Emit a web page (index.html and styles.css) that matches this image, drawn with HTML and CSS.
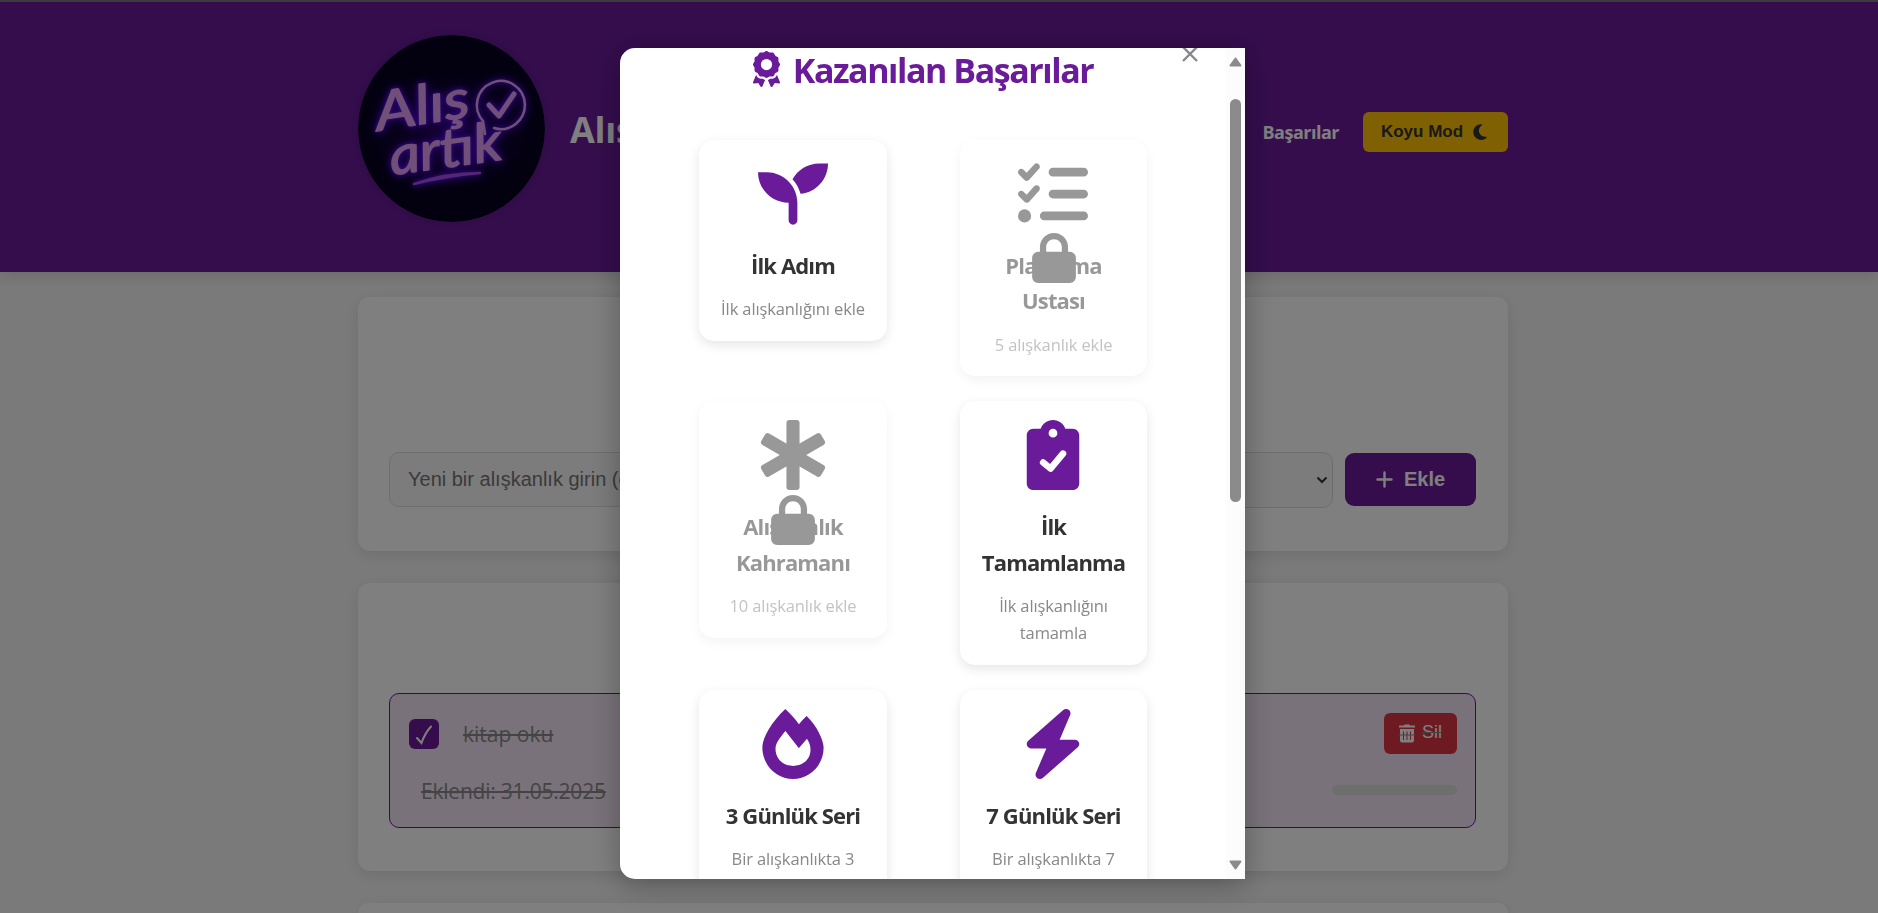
FILE: index.html
```html
<!DOCTYPE html>
<html lang="tr">
<head>
<meta charset="utf-8">
<title>Alış Artık</title>
<link rel="stylesheet" href="styles.css">
</head>
<body>
<header class="header">
  <div class="header-inner">
    <div class="brand">
      <svg class="logo" viewBox="0 0 187 187">
        <defs>
          <radialGradient id="night"><stop offset="0" stop-color="#2c0078"/><stop offset=".5" stop-color="#120038"/><stop offset="1" stop-color="#060020"/></radialGradient>
        </defs>
        <circle cx="93.500" cy="93.500" r="93.500" fill="#060020"/>
        <ellipse cx="92" cy="96" rx="88" ry="62" fill="url(#night)"/>
        <g class="neon">
          <text class="script" x="20" y="96" font-size="54" textLength="95" lengthAdjust="spacingAndGlyphs" transform="rotate(-9 20 96)">Alış</text>
          <text class="script" x="34" y="140" font-size="54" textLength="113" lengthAdjust="spacingAndGlyphs" transform="rotate(-8 34 140)">artık</text>
          <path class="tube" d="M136 93A24 24 0 1 0 125 86L127 99" stroke-width="2.500"/>
          <path class="tube" d="M131 70L141 81L156 59" stroke-width="5"/>
          <path class="tube under" d="M56 149Q88 138 122 138Q88 141 56 149Z" stroke-width="2.500"/>
        </g>
      </svg>
      <h1 class="site-title">Alış Artık</h1>
    </div>
    <nav class="nav">
      <a class="nav-link">Başarılar</a>
      <button class="mode-btn">Koyu Mod
        <svg class="moon" viewBox="0 0 384 512"><path d="M223.500 32C100 32 0 132.300 0 256S100 480 223.500 480c60.600 0 115.500-24.200 155.800-63.400c5-4.900 6.300-12.500 3.100-18.700s-10.100-9.700-17-8.500c-9.800 1.700-19.800 2.600-30.100 2.600c-96.900 0-175.500-78.800-175.500-176c0-65.800 36-123.100 89.300-153.300c6.100-3.500 9.200-10.500 7.700-17.300s-7.300-11.900-14.300-12.500c-6.300-.5-12.600-.8-19-.8z"/></svg>
      </button>
    </nav>
  </div>
</header>
<main class="container">
  <section class="panel panel-form">
    <div class="habit-form">
      <div class="field">Yeni bir alışkanlık girin (örn: Su iç)</div>
      <div class="select"><svg class="chevron" viewBox="0 0 12 8"><path d="M1.500 1.500L6 6L10.500 1.500"/></svg></div>
      <button class="add-btn"><svg class="plus" viewBox="0 0 17 17"><path d="M8.500 1.500V15.500M1.500 8.500H15.500"/></svg>Ekle</button>
    </div>
  </section>
  <section class="panel panel-list">
    <div class="habit">
      <div class="habit-row">
        <span class="check"><svg class="tick" viewBox="0 0 30 30"><path d="M8 19L12.500 24Q16 14 22 7.500"/></svg></span>
        <span class="habit-name">kitap oku</span>
        <button class="delete-btn">
          <svg class="trash" viewBox="0 0 16 19"><path fill-rule="evenodd" d="M5.500 0.500H10.500L11 1.500H15.500Q16 1.500 16 2V3.500H0V2Q0 1.500 .5 1.500H5ZM1 5H15V16.500Q15 18.500 13 18.500H3Q1 18.500 1 16.500ZM4 7.500V16H5V7.500ZM7.500 7.500V16H8.500V7.500ZM11 7.500V16H12V7.500Z"/><path class="trash-line" d="M0 11H16"/></svg>
          <span class="struck">Sil</span>
        </button>
      </div>
      <div class="habit-row meta">
        <span class="habit-date">Eklendi: 31.05.2025</span>
        <span class="progress"></span>
      </div>
    </div>
  </section>
  <section class="panel panel-next"></section>
</main>
<div class="overlay">
  <div class="modal">
    <div class="modal-body">
      <span class="close"><svg class="close-x" viewBox="0 0 16 16"><path d="M1 1L15 15M15 1L1 15"/></svg></span>
      <h2 class="modal-title">
        <svg class="award" viewBox="0 0 384 512"><path d="M173.800 5.500c11-7.300 25.400-7.300 36.400 0L228 17.200c6 3.900 13 5.800 20.100 5.400l21.300-1.300c13.200-.8 25.600 6.400 31.500 18.200l9.600 19.100c3.200 6.400 8.400 11.500 14.700 14.700L344.500 83c11.800 5.900 19 18.300 18.200 31.500l-1.300 21.300c-.4 7.100 1.500 14.200 5.400 20.100l11.800 17.800c7.300 11 7.300 25.400 0 36.400L366.800 228c-3.900 6-5.800 13-5.400 20.100l1.300 21.300c.8 13.200-6.400 25.600-18.200 31.500l-19.100 9.600c-6.400 3.200-11.500 8.400-14.700 14.700L301 344.500c-5.900 11.800-18.300 19-31.500 18.200l-21.300-1.300c-7.100-.4-14.200 1.500-20.100 5.400l-17.800 11.800c-11 7.300-25.400 7.300-36.400 0L156 366.800c-6-3.900-13-5.800-20.100-5.400l-21.300 1.300c-13.200 .8-25.600-6.400-31.500-18.200l-9.600-19.100c-3.200-6.400-8.400-11.500-14.700-14.700L39.500 301c-11.800-5.900-19-18.300-18.200-31.500l1.300-21.300c.4-7.100-1.500-14.200-5.400-20.100L5.500 210.200c-7.300-11-7.300-25.400 0-36.400L17.200 156c3.900-6 5.800-13 5.400-20.100l-1.300-21.300c-.8-13.200 6.400-25.600 18.200-31.500l19.100-9.600C65 70.200 70.200 65 73.400 58.600L83 39.500c5.900-11.800 18.300-19 31.500-18.200l21.300 1.300c7.100 .4 14.200-1.500 20.100-5.400L173.800 5.500zM272 192a80 80 0 1 0 -160 0 80 80 0 1 0 160 0zM1.300 441.800L44.400 339.300c.2 .1 .3 .2 .4 .4l9.600 19.100c11.700 23.200 36 37.300 62 35.800l21.300-1.300c.2 0 .5 0 .7 .2l17.800 11.800c5.100 3.300 10.500 5.900 16.100 7.700l-37.600 89.300c-2.300 5.500-7.400 9.200-13.300 9.700s-11.600-2.200-14.800-7.200L74.400 455.500l-56.100 8.300c-5.700 .8-11.400-1.500-15-6s-4.300-10.700-2.100-16zm248 60.400L211.700 413c5.600-1.800 11-4.300 16.100-7.700l17.800-11.800c.2-.1 .4-.2 .7-.2l21.300 1.300c26 1.500 50.300-12.600 62-35.800l9.600-19.100c.1-.2 .2-.3 .4-.4l43.200 102.500c2.200 5.300 1.400 11.400-2.100 16s-9.300 6.900-15 6l-56.100-8.300-32.200 49.200c-3.200 5-8.900 7.700-14.800 7.200s-11-4.300-13.300-9.700z"/></svg>
        <span>Kazanılan Başarılar</span>
      </h2>
      <div class="grid">
        <article class="badge">
          <svg class="badge-icon" viewBox="0 0 512 512"><path d="M64 96H0c0 123.700 100.300 224 224 224v128c0 17.700 14.300 32 32 32s32-14.300 32-32V320C288 196.300 187.700 96 64 96zM448 32c-84.300 0-157.400 46.500-195.700 115.200 27.700 30.200 48.200 66.900 59 107.600C424 243.100 512 147.900 512 32h-64z"/></svg>
          <h3 class="badge-title">İlk Adım</h3>
          <p class="badge-text">İlk alışkanlığını ekle</p>
        </article>
        <article class="badge locked">
          <svg class="badge-icon" viewBox="0 0 512 512"><path d="M152.100 38.200c9.900 8.900 10.700 24 1.800 33.900l-72 80c-4.400 4.900-10.600 7.800-17.200 7.900s-12.900-2.400-17.600-7L7 113C-2.300 103.600-2.300 88.400 7 79s24.600-9.400 33.900 0l22.100 22.100 55.100-61.200c8.900-9.900 24-10.700 33.900-1.800zm0 160c9.900 8.900 10.700 24 1.800 33.900l-72 80c-4.400 4.900-10.600 7.800-17.200 7.900s-12.900-2.400-17.600-7L7 273c-9.400-9.400-9.400-24.600 0-33.900s24.600-9.400 33.900 0l22.100 22.100 55.100-61.200c8.900-9.900 24-10.700 33.900-1.800zM224 96c0-17.700 14.300-32 32-32H480c17.700 0 32 14.300 32 32s-14.300 32-32 32H256c-17.700 0-32-14.300-32-32zm0 160c0-17.700 14.300-32 32-32H480c17.700 0 32 14.300 32 32s-14.300 32-32 32H256c-17.700 0-32-14.300-32-32zM160 416c0-17.700 14.300-32 32-32H480c17.700 0 32 14.300 32 32s-14.300 32-32 32H192c-17.700 0-32-14.300-32-32zM48 368a48 48 0 1 1 0 96 48 48 0 1 1 0-96z"/></svg>
          <h3 class="badge-title">Planlama Ustası</h3>
          <p class="badge-text">5 alışkanlık ekle</p>
          <svg class="lock" viewBox="0 0 448 512"><path d="M144 144v48H304V144c0-44.200-35.800-80-80-80s-80 35.800-80 80zM80 192V144C80 64.500 144.500 0 224 0s144 64.500 144 144v48h16c35.300 0 64 28.700 64 64V448c0 35.300-28.700 64-64 64H64c-35.300 0-64-28.700-64-64V256c0-35.300 28.700-64 64-64H80z"/></svg>
        </article>
        <article class="badge locked">
          <svg class="badge-icon" viewBox="0 0 512 512"><rect x="208" width="96" height="512" rx="22"/><rect x="208" y="4" width="96" height="504" rx="22" transform="rotate(60 256 256)"/><rect x="208" y="4" width="96" height="504" rx="22" transform="rotate(-60 256 256)"/></svg>
          <h3 class="badge-title">Alışkanlık Kahramanı</h3>
          <p class="badge-text">10 alışkanlık ekle</p>
          <svg class="lock" viewBox="0 0 448 512"><path d="M144 144v48H304V144c0-44.200-35.800-80-80-80s-80 35.800-80 80zM80 192V144C80 64.500 144.500 0 224 0s144 64.500 144 144v48h16c35.300 0 64 28.700 64 64V448c0 35.300-28.700 64-64 64H64c-35.300 0-64-28.700-64-64V256c0-35.300 28.700-64 64-64H80z"/></svg>
        </article>
        <article class="badge">
          <svg class="badge-icon" viewBox="0 0 384 512"><path d="M192 0c-41.800 0-77.400 26.700-90.500 64H48C21.500 64 0 85.500 0 112V464c0 26.500 21.500 48 48 48H336c26.500 0 48-21.500 48-48V112c0-26.500-21.500-48-48-48H282.500C269.400 26.700 233.800 0 192 0zm0 64a32 32 0 1 1 0 64 32 32 0 1 1 0-64z"/><path class="cut" d="M120 311L174 355L265 246"/></svg>
          <h3 class="badge-title">İlk Tamamlanma</h3>
          <p class="badge-text">İlk alışkanlığını tamamla</p>
        </article>
        <article class="badge">
          <svg class="badge-icon" viewBox="0 0 448 512"><path d="M323.560 51.200c-20.800 19.300-39.560 39.590-56.220 59.970C240.080 73.620 206.280 35.530 168 0 69.740 91.170 0 209.960 0 281.600 0 408.850 100.290 512 224 512s224-103.150 224-230.400c0-53.270-51.980-163.140-124.440-230.400zm-19.470 340.650C282.430 407.010 255.720 416 226.860 416 154.710 416 96 368.260 96 290.750c0-38.610 24.310-72.630 72.790-130.750 6.930 7.980 98.830 125.340 98.830 125.340l58.630-66.880c4.140 6.850 7.910 13.550 11.270 19.970 27.350 52.190 15.810 118.970-33.430 153.420z"/></svg>
          <h3 class="badge-title">3 Günlük Seri</h3>
          <p class="badge-text">Bir alışkanlıkta 3</p>
        </article>
        <article class="badge">
          <svg class="badge-icon" viewBox="0 0 448 512"><path d="M349.400 44.600c5.900-13.700 1.500-29.700-10.600-38.500s-28.600-8-39.900 1.800l-256 224c-10 8.800-13.600 22.900-8.900 35.300S50.700 288 64 288H175.500L98.600 467.400c-5.900 13.700-1.500 29.700 10.600 38.500s28.600 8 39.900-1.800l256-224c10-8.800 13.600-22.900 8.900-35.300s-16.600-20.700-30-20.700H272.500L349.400 44.600z"/></svg>
          <h3 class="badge-title">7 Günlük Seri</h3>
          <p class="badge-text">Bir alışkanlıkta 7</p>
        </article>
      </div>
    </div>
    <div class="scrollbar">
      <svg class="arrow" viewBox="0 0 13 10"><path d="M6.500 1.500L11.500 8.500H1.500Z"/></svg>
      <span class="thumb"></span>
      <svg class="arrow down" viewBox="0 0 13 10"><path d="M6.500 8.500L11.500 1.500H1.500Z"/></svg>
    </div>
  </div>
</div>
</body>
</html>
```
FILE: styles.css
```css
* { box-sizing: border-box; margin: 0; padding: 0; }
html, body { height: 100%; overflow: hidden; }
body {
  background: #f5f5f5;
  border-top: 2px solid #787878;
  color: #333;
  font-family: "Open Sans", "Noto Sans", sans-serif;
  font-size: 18px;
  line-height: 1.6;
}
button { border: 0; font-family: "Liberation Sans", Arial, sans-serif; }
svg { display: block; flex: none; }

.header {
  position: relative;
  height: 270px;
  background: #6a1b9a;
  box-shadow: 0 4px 14px rgba(0, 0, 0, .14);
  padding-top: 33px;
}
.header-inner { width: 1150px; margin: 0 auto 0 358px; display: flex; justify-content: space-between; }
.brand { display: flex; align-items: center; gap: 25px; height: 187px; }
.logo { width: 187px; height: 187px; border-radius: 50%; box-shadow: 0 0 12px rgba(0, 0, 0, .15); }
.neon { filter: drop-shadow(0 0 2px #6a1cff) drop-shadow(0 0 5px #4b00d8); }
.script { font-family: "Lato", sans-serif; font-style: italic; font-weight: 400; fill: #e0a0f0; stroke: #e0a0f0; stroke-width: 1.400; stroke-linejoin: round; }
.tube { fill: none; stroke: #e0a0f0; stroke-linecap: round; stroke-linejoin: round; }
.under { stroke: #a64df0; }
.site-title { color: #fff; font-size: 36px; line-height: 58px; padding-top: 3px; letter-spacing: -.3px; }
.nav { display: flex; align-items: center; gap: 24px; height: 40px; margin-top: 77px; }
.nav-link { color: #fff; font-weight: 700; font-size: 18px; letter-spacing: -.5px; }
.mode-btn {
  display: flex; align-items: center; justify-content: center; gap: 10px;
  width: 145px; height: 40px; border-radius: 6px; padding: 0 3px 1px 0;
  background: #ffc107; color: #333; font-size: 17px; font-weight: 700;
}
.moon { width: 14px; height: 18px; fill: #333; }

.container { width: 1150px; height: 614px; overflow: visible; margin: 25px 0 0 358px; display: flex; flex-direction: column; gap: 32px; }
.panel { flex: none; background: #fff; border-radius: 12px; padding: 31px; box-shadow: 0 4px 15px rgba(0, 0, 0, .1); }
.panel-form { height: 254px; padding-top: 155px; }
.panel-list { height: 288px; padding-top: 110px; }
.panel-next { height: 10px; padding: 0; border-radius: 12px 12px 0 0; }
.habit-form { display: flex; width: 1087px; }
.field, .select { height: 55px; border: 1px solid #ddd; border-radius: 10px; background: #f9f9f9; }
.field { width: 520px; padding-left: 18px; color: #757575; font: 20px/53px "Liberation Sans", Arial, sans-serif; }
.select { width: 410px; height: 56px; margin-left: 14px; padding-right: 4px; display: flex; align-items: center; justify-content: flex-end; }
.chevron { width: 12px; height: 8px; fill: none; stroke: #333; stroke-width: 2; }
.add-btn {
  display: flex; align-items: center; justify-content: center; gap: 11px;
  width: 131px; height: 53px; margin: 1px 0 0 12px; border-radius: 9px;
  background: #6a1b9a; color: #fff; font-size: 20px; font-weight: 700;
}
.plus { width: 17px; height: 17px; stroke: #fff; stroke-width: 2.400; stroke-linecap: round; }

.habit {
  width: 1087px; height: 135px; border: 1px solid #6a1b9a; border-radius: 10px;
  background: #f3e5f5; padding: 19px 18px 0 19px; color: #888;
}
.habit-row { display: flex; align-items: center; height: 42px; }
.check { width: 30px; height: 30px; border-radius: 6px; background: #6a1b9a; }
.tick { width: 30px; height: 30px; fill: none; stroke: #fff; stroke-width: 2; stroke-linecap: round; }
.habit-name { margin-left: 24px; padding-top: 2px; font-size: 21px; text-decoration: line-through; text-decoration-thickness: 2px; }
.delete-btn {
  display: flex; align-items: center; justify-content: center; gap: 7px;
  width: 73px; height: 41px; margin: 0 0 2px auto; border-radius: 6px;
  background: #dc3545; color: #fff; font-size: 18px;
}
.struck { text-decoration: line-through; text-decoration-color: #888; margin-top: -2px; }
.trash { width: 16px; height: 19px; fill: #fff; }
.trash-line { stroke: #888; stroke-width: 1; }
.meta { margin-top: 14px; padding-left: 12px; justify-content: space-between; }
.habit-date { padding-top: 3px; font-size: 21px; letter-spacing: -.22px; text-decoration: line-through; text-decoration-thickness: 2px; }
.progress { width: 125px; height: 10px; border-radius: 5px; background: #dcdcdc; }

.overlay { position: fixed; inset: 0; background: rgba(0, 0, 0, .5); padding: 48px 0 0 620px; }
.modal {
  width: 625px; height: 831px; display: flex; overflow: hidden;
  border-radius: 15px 0 0 15px; background: #fff;
  box-shadow: 0 5px 30px rgba(0, 0, 0, .3);
}
.modal-body { position: relative; width: 606px; overflow: hidden; }
.close { position: absolute; top: -2px; right: 28px; }
.close-x { width: 16px; height: 16px; stroke: #888; stroke-width: 2.400; }
.modal-title {
  display: flex; justify-content: center; gap: 13px; height: 92px;
  padding-top: 2px; color: #6a1b9a; font-size: 34px; line-height: 40px; letter-spacing: -1.450px; white-space: nowrap;
}
.award { width: 27px; height: 36px; margin-top: 1px; fill: #6a1b9a; }
.grid { display: grid; grid-template-columns: 188px 187px; column-gap: 73px; row-gap: 25px; justify-content: center; align-items: start; }
.badge {
  position: relative; padding: 19px 16px 18px; border-radius: 15px; background: #fff; text-align: center;
  box-shadow: 0 4px 12px rgba(0, 0, 0, .1);
}
.badge-icon { width: 70px; height: 70px; margin: 0 auto 19px; fill: #6a1b9a; }
.badge:nth-child(even) .badge-icon { margin-left: 42px; }
.cut { fill: none; stroke: #fff; stroke-width: 48; stroke-linecap: round; stroke-linejoin: round; }
.badge-title { font-size: 22px; line-height: 35.300px; letter-spacing: -.85px; margin-bottom: 13px; }
.badge-text { color: #888; font-size: 16.500px; line-height: 26.800px; letter-spacing: -.12px; }
.locked { opacity: .5; }
.locked .badge-icon, .lock { fill: #333; }
.lock { position: absolute; left: 50%; top: 50%; width: 44px; height: 50px; transform: translate(-50%, -50%); }

.scrollbar { width: 19px; background: #fcfcfc; display: flex; flex-direction: column; align-items: center; padding: 9px 0; }
.arrow { width: 13px; height: 10px; fill: #8b8b8b; stroke: #8b8b8b; stroke-width: 2; stroke-linejoin: round; }
.thumb { width: 11px; height: 403px; margin-top: 32px; border-radius: 6px; background: #8b8b8b; }
.down { margin-top: auto; }
```
